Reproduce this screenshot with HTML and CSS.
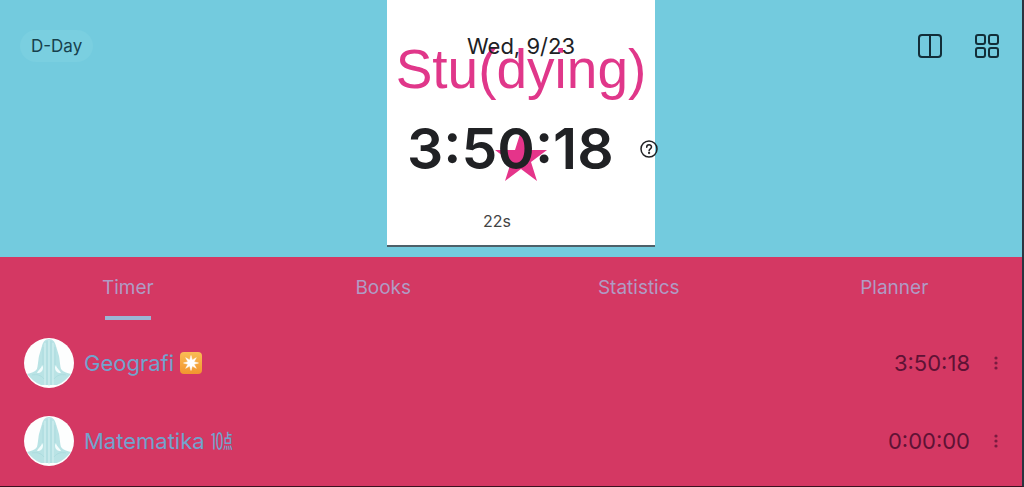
FILE: index.html
```html
<!DOCTYPE html>
<html lang="en">
<head>
  <meta charset="utf-8">
  <meta name="viewport" content="width=device-width, initial-scale=1">
  <title>Study Timer</title>
  <link rel="stylesheet" href="styles.css">
</head>
<body>
  <!-- Shared avatar drawing -->
  <svg class="sprite" aria-hidden="true">
    <symbol id="avatar" viewBox="0 0 50 50">
      <circle cx="25" cy="25" r="25" fill="#fdfefe"/>
      <path d="M25 1c-4 0-6 3-7 7l-3 10c-1 6-1 9-2 13-2 3-6 4-10 5 4 5 9 9 14 11h16c5-2 10-6 14-11-4-1-8-2-10-5-1-4-1-7-2-13l-3-10c-1-4-3-7-7-7z" fill="#b9e3e5"/>
      <path d="M18 27c0 3-4 5-5 8 4 0 6-2 6-6zM32 27c0 3 4 5 5 8-4 0-6-2-6-6z" fill="#f3fcfc"/>
      <path d="M21 5v42M25 2v46M29 5v42" fill="none" stroke="#d5f0f1"/>
      <path d="M19 9v18M23 3v44M27 3v44M31 9v18M8 37c5-1 9 0 12 4M42 37c-5-1-9 0-12 4" fill="none" stroke="#a5d7da" stroke-width=".6"/>
    </symbol>
  </svg>

  <div class="app">
    <header class="header">
      <div class="header-left">
        <button class="dday" type="button">D-Day</button>
      </div>

      <div class="stage">
        <div class="poster">
          <div class="poster-title">Stu(dying)</div>
          <svg class="poster-star" viewBox="0 0 52 50" aria-hidden="true">
            <path d="M26 0l6 19h20L36 31l6 19-16-12-16 12 6-19L0 19h20z" fill="#e5348a"/>
          </svg>
        </div>
        <div class="readout">
          <div class="date">Wed, 9/23</div>
          <div class="clock-row">
            <div class="clock">3:50:18</div>
            <button class="icon-button help" type="button" aria-label="Help">
              <svg width="18" height="18" viewBox="0 0 18 18" fill="none" stroke="#202124" stroke-width="1.5" stroke-linecap="round">
                <circle cx="9" cy="9" r="8"/>
                <path d="M6.700 7.200c0-3.200 4.800-3.100 4.800-.2 0 1.800-2.400 1.900-2.400 3.700"/>
                <circle cx="9.100" cy="13" r=".4"/>
              </svg>
            </button>
          </div>
          <div class="seconds">22s</div>
        </div>
      </div>

      <div class="actions">
        <button class="icon-button" type="button" aria-label="Split view">
          <svg width="24" height="24" viewBox="0 0 24 24" fill="none" stroke="#122e38" stroke-width="2">
            <rect x="1" y="1" width="22" height="22" rx="3"/>
            <path d="M12 1v22"/>
          </svg>
        </button>
        <button class="icon-button" type="button" aria-label="Grid view">
          <svg width="24" height="24" viewBox="0 0 24 24" fill="none" stroke="#122e38" stroke-width="2">
            <rect x="1" y="1" width="9" height="9" rx="2"/>
            <rect x="14" y="1" width="9" height="9" rx="2"/>
            <rect x="1" y="14" width="9" height="9" rx="2"/>
            <rect x="14" y="14" width="9" height="9" rx="2"/>
          </svg>
        </button>
      </div>
    </header>

    <main class="panel">
      <nav class="tabs">
        <a class="tab active" href="#timer">Timer</a>
        <a class="tab" href="#books">Books</a>
        <a class="tab" href="#statistics">Statistics</a>
        <a class="tab" href="#planner">Planner</a>
      </nav>

      <ul class="subjects">
        <li class="subject">
          <svg class="avatar" aria-hidden="true"><use href="#avatar"/></svg>
          <span class="name">Geografi</span>
          <svg class="badge" viewBox="0 0 22 22" aria-hidden="true">
            <defs>
              <linearGradient id="orange" x1="0" y1="0" x2="0" y2="1">
                <stop offset="0" stop-color="#f9bd55"/>
                <stop offset="1" stop-color="#f2952f"/>
              </linearGradient>
            </defs>
            <rect width="22" height="22" rx="4" fill="url(#orange)"/>
            <path d="M11 3.500l1.300 4.400 4-2.200-2.200 4 4.400 1.300-4.400 1.300 2.200 4-4-2.200-1.300 4.400-1.300-4.400-4 2.200 2.200-4-4.400-1.300 4.400-1.300-2.200-4 4 2.200z" fill="#fff" stroke="#fff" stroke-width=".5"/>
          </svg>
          <span class="time">3:50:18</span>
          <button class="icon-button more" type="button" aria-label="More options for Geografi">
            <svg width="4" height="16" viewBox="0 0 4 16" fill="#7a1b40">
              <circle cx="2" cy="3" r="1.600"/><circle cx="2" cy="8" r="1.600"/><circle cx="2" cy="13" r="1.600"/>
            </svg>
          </button>
        </li>
        <li class="subject">
          <svg class="avatar" aria-hidden="true"><use href="#avatar"/></svg>
          <span class="name">Matematika ㍢</span>
          <span class="time">0:00:00</span>
          <button class="icon-button more" type="button" aria-label="More options for Matematika">
            <svg width="4" height="16" viewBox="0 0 4 16" fill="#7a1b40">
              <circle cx="2" cy="3" r="1.600"/><circle cx="2" cy="8" r="1.600"/><circle cx="2" cy="13" r="1.600"/>
            </svg>
          </button>
        </li>
      </ul>
    </main>
  </div>
</body>
</html>
```
FILE: styles.css
```css
* {
  box-sizing: border-box;
}

body {
  margin: 0;
  font-family: Inter, "Noto Sans CJK JP", sans-serif;
  color: #202124;
}

button {
  border: none;
  font-family: inherit;
  color: inherit;
  cursor: pointer;
}

.sprite {
  display: none;
}

.app {
  display: flex;
  flex-direction: column;
  min-height: 100vh;
  border-right: 2px solid #2b3440;
  border-bottom: 1px solid #3a1020;
}

/* Header */
.header {
  display: grid;
  grid-template-columns: 1fr 268px 1fr;
  padding: 0 0 10px 20px;
  background-color: #73cbde;
}

.header-left {
  padding-top: 30px;
}

.dday {
  height: 32px;
  padding: 0 11px;
  border-radius: 16px;
  background-color: #7acfe0;
  color: #17414d;
  font-size: 17px;
}

.actions {
  display: flex;
  justify-content: flex-end;
  align-items: flex-start;
  gap: 33px;
  padding: 34px 23px 0 0;
}

.icon-button {
  display: flex;
  flex: none;
  padding: 0;
  background: none;
}

/* The poster and the readout share one grid cell */
.stage {
  display: grid;
  grid-template-columns: 100%;
}

.poster,
.readout {
  grid-area: 1 / 1;
}

.poster {
  display: flex;
  flex-direction: column;
  align-items: center;
  padding-top: 35px;
  background-color: #fff;
  border-bottom: 2px solid #4d6069;
}

.poster-title {
  font-family: "Liberation Sans Narrow", "Liberation Sans", sans-serif;
  font-size: 55px;
  line-height: 68px;
  color: #e0378a;
}

.poster-star {
  width: 52px;
  height: 50px;
  margin-top: 28px;
}

.readout {
  padding: 32px 0 14px;
}

.date {
  font-size: 22px;
  line-height: 28px;
  text-align: center;
}

.clock-row {
  display: flex;
  align-items: center;
  justify-content: space-between;
  margin: 54px -3px 0 0;
  padding-left: 20px;
}

.clock {
  font-size: 57px;
  font-weight: 600;
  line-height: 70px;
}

.seconds {
  padding: 25px 48px 0 0;
  font-size: 16px;
  line-height: 24px;
  color: #444;
  text-align: center;
}

/* Tabs */
.panel {
  flex: 1;
  background-color: #d43863;
}

.tabs {
  display: grid;
  grid-template-columns: repeat(4, 1fr);
}

.tab {
  display: flex;
  flex-direction: column;
  align-items: center;
  padding-top: 18px;
  font-size: 19px;
  line-height: 26px;
  color: #b09bc4;
  text-decoration: none;
}

.tab::after {
  content: "";
  width: 46px;
  height: 4px;
  margin-top: 15px;
}

.tab.active::after {
  background-color: #9bb5d4;
}

/* Subjects */
.subjects {
  margin: 0;
  padding: 4px 24px 0;
  list-style: none;
}

.subject {
  display: flex;
  align-items: center;
  height: 78px;
}

.avatar {
  flex: none;
  width: 50px;
  height: 50px;
  margin-right: 10px;
}

.name {
  font-size: 22px;
  line-height: 28px;
  color: #72a3cd;
}

.badge {
  width: 22px;
  height: 22px;
  margin-left: 6px;
}

.time {
  margin-left: auto;
  font-size: 22px;
  line-height: 28px;
  color: #5f1235;
}

.more {
  margin-left: 24px;
}
```
